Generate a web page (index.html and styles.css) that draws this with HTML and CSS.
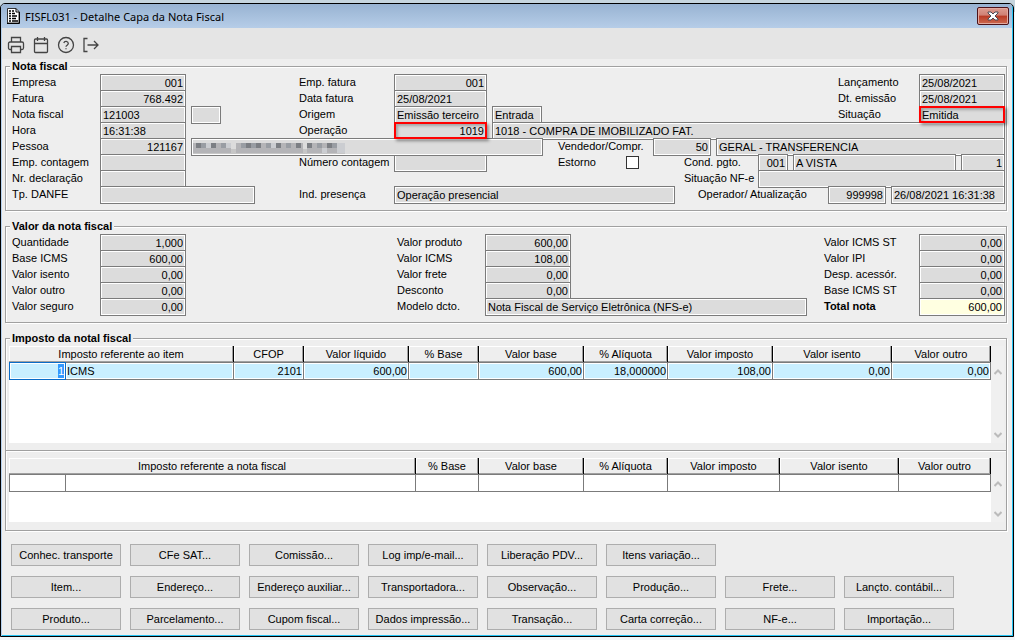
FILE: index.html
```html
<!DOCTYPE html>
<html lang="pt-BR">
<head>
    <meta charset="UTF-8">
    <title>FISFL031 - Detalhe Capa da Nota Fiscal</title>
    <link rel="stylesheet" href="styles.css">
</head>
<body>
<div class="window">
    <div class="titlebar">
        <svg class="app_icon" width="13" height="16" viewBox="0 0 13 16">
            <path d="M0.5 0.5H9L12 3.5V15H0.5Z" fill="#fff" stroke="#333"/>
            <path d="M9 0.5V4H12M12.5 4V15.5H0" fill="none" stroke="#000"/>
            <path d="M2 3H4M5 3H7M2 5.5H4M5 5.5H8M2 8H4M5 8H10M2 10.5H4M5 10.5H9M2 13H4M5 13H11" stroke="#000" stroke-width="1.5"/>
        </svg>
        <h1>FISFL031 - Detalhe Capa da Nota Fiscal</h1>
        <button class="close" aria-label="Fechar">
            <svg width="12" height="10" viewBox="0 0 12 10">
                <path d="M1 1H4L6 3L8 1H11V2L8 5L11 8V9H8L6 7L4 9H1V8L4 5L1 2Z" fill="#fff" stroke="#4a4a55"/>
            </svg>
        </button>
    </div>

    <div class="toolbar">
        <button aria-label="Imprimir">
            <svg width="18" height="18" viewBox="0 0 18 18">
                <path d="M4.5 6V1.5H13.5V6M4.5 13.5H3A1.5 1.5 0 0 1 1.5 12V7.5A1.5 1.5 0 0 1 3 6H15A1.5 1.5 0 0 1 16.5 7.5V12A1.5 1.5 0 0 1 15 13.5H13.5M4.5 10.5H13.5V16.5H4.5Z"/>
            </svg>
        </button>
        <button aria-label="Calendário">
            <svg width="18" height="18" viewBox="0 0 18 18">
                <path d="M3.5 3H14.5A1 1 0 0 1 15.5 4V15.5A1 1 0 0 1 14.5 16.5H3.5A1 1 0 0 1 2.5 15.5V4A1 1 0 0 1 3.5 3ZM2.5 7.5H15.5M5.5 1V5M12.5 1V5"/>
            </svg>
        </button>
        <button aria-label="Ajuda">
            <svg width="18" height="18" viewBox="0 0 18 18">
                <circle cx="9" cy="9" r="7.5"/>
                <path d="M6.8 7A2.3 2.3 0 0 1 11.3 7.6C11.3 9 9 9.3 9 10.7M9 12.3V13.3"/>
            </svg>
        </button>
        <button aria-label="Sair">
            <svg width="18" height="18" viewBox="0 0 18 18">
                <path d="M5.5 2.5H2V15.5H5.5M5.5 9H16M12 5L16 9L12 13"/>
            </svg>
        </button>
    </div>

    <form class="content">
        <fieldset>
            <legend>Nota fiscal</legend>
            <div class="row">
                <label class="l88" for="empresa">Empresa</label>
                <input id="empresa" class="w86 num" value="001" readonly>
                <label class="l95 col2" for="emp_fatura">Emp. fatura</label>
                <input id="emp_fatura" class="w93 num" value="001" readonly>
                <label class="l81 end" for="lancamento">Lançamento</label>
                <input id="lancamento" class="w86" value="25/08/2021" readonly>
            </div>
            <div class="row">
                <label class="l88" for="fatura">Fatura</label>
                <input id="fatura" class="w86 num" value="768.492" readonly>
                <label class="l95 col2" for="data_fatura">Data fatura</label>
                <input id="data_fatura" class="w93" value="25/08/2021" readonly>
                <label class="l81 end" for="emissao">Dt. emissão</label>
                <input id="emissao" class="w86" value="25/08/2021" readonly>
            </div>
            <div class="row">
                <label class="l88" for="nota">Nota fiscal</label>
                <input id="nota" class="w86" value="121003" readonly>
                <input class="w30 next" aria-label="Série" readonly>
                <label class="l95 col2_serie" for="origem">Origem</label>
                <input id="origem" class="w93" value="Emissão terceiro" readonly>
                <input class="w50 next" aria-label="Tipo" value="Entrada" readonly>
                <label class="l81 end" for="situacao">Situação</label>
                <input id="situacao" class="w86 marked" value="Emitida" readonly>
            </div>
            <div class="row">
                <label class="l88" for="hora">Hora</label>
                <input id="hora" class="w86" value="16:31:38" readonly>
                <label class="l95 col2" for="operacao">Operação</label>
                <input id="operacao" class="w93 num marked" value="1019" readonly>
                <input class="fill next" aria-label="Descrição da operação" value="1018 - COMPRA DE IMOBILIZADO FAT." readonly>
            </div>
            <div class="row">
                <label class="l88" for="pessoa">Pessoa</label>
                <input id="pessoa" class="w86 num" value="121167" readonly>
                <span class="masked next">
                    <input class="w352" aria-label="Nome da pessoa" readonly>
                    <svg width="152" height="14" viewBox="0 0 152 14" shape-rendering="crispEdges">
                        <path d="M0 9H152V14H0Z" fill="#c6c6c6"/>
                        <path d="M0 3H38V13H0ZM43 3H110V13H43ZM114 3H152V13H114Z" fill="#b4b4b7"/>
                        <path d="M3 3H8V8H3ZM18 3H23V8H18ZM53 3H58V8H53ZM63 3H68V8H63ZM83 3H88V8H83ZM103 3H108V8H103ZM114 3H119V8H114ZM134 3H139V8H134Z" fill="#7c7f84"/>
                        <path d="M8 3H13V8H8ZM28 3H33V8H28ZM48 3H53V8H48ZM58 3H63V8H58ZM73 3H78V8H73ZM93 3H98V8H93ZM124 3H129V8H124ZM139 3H144V8H139Z" fill="#999da3"/>
                        <path d="M13 3H18V8H13ZM33 3H38V8H33ZM78 3H83V8H78ZM129 8H134V13H129ZM144 3H152V13H144Z" fill="#cbcdd1"/>
                    </svg>
                </span>
                <label class="l95 col3" for="vendedor">Vendedor/Compr.</label>
                <input id="vendedor" class="w58 num" value="50" readonly>
                <input class="fill next" aria-label="Nome do vendedor" value="GERAL - TRANSFERENCIA" readonly>
            </div>
            <div class="row">
                <label class="l88" for="emp_contagem">Emp. contagem</label>
                <input id="emp_contagem" class="w86" readonly>
                <label class="l95 col2" for="contagem">Número contagem</label>
                <input id="contagem" class="w93" readonly>
                <label class="l68 col_estorno" for="estorno">Estorno</label>
                <input id="estorno" type="checkbox">
                <label class="l74 col_cond" for="cond">Cond. pgto.</label>
                <input id="cond" class="w30 num" value="001" readonly>
                <input class="fill next" aria-label="Descrição da condição" value="A VISTA" readonly>
                <input class="w44 num next" aria-label="Parcelas" value="1" readonly>
            </div>
            <div class="row">
                <label class="l88" for="declaracao">Nr. declaração</label>
                <input id="declaracao" class="w86" readonly>
                <label class="l74 col_nfe" for="situacao_nfe">Situação NF-e</label>
                <input id="situacao_nfe" class="fill" readonly>
            </div>
            <div class="row">
                <label class="l88" for="danfe">Tp. DANFE</label>
                <input id="danfe" class="w155" readonly>
                <label class="l95 col2_danfe" for="presenca">Ind. presença</label>
                <input id="presenca" class="w281" value="Operação presencial" readonly>
                <label class="l130 end" for="operador">Operador/ Atualização</label>
                <input id="operador" class="w58 num" value="999998" readonly>
                <input class="w114 next" aria-label="Data da atualização" value="26/08/2021 16:31:38" readonly>
            </div>
        </fieldset>

        <fieldset>
            <legend>Valor da nota fiscal</legend>
            <div class="row">
                <label class="l88" for="quantidade">Quantidade</label>
                <input id="quantidade" class="w86 num" value="1,000" readonly>
                <label class="l88 col_valor" for="produto">Valor produto</label>
                <input id="produto" class="w86 num" value="600,00" readonly>
                <label class="l95 end" for="icms_st">Valor ICMS ST</label>
                <input id="icms_st" class="w86 num" value="0,00" readonly>
            </div>
            <div class="row">
                <label class="l88" for="base_icms">Base ICMS</label>
                <input id="base_icms" class="w86 num" value="600,00" readonly>
                <label class="l88 col_valor" for="icms">Valor ICMS</label>
                <input id="icms" class="w86 num" value="108,00" readonly>
                <label class="l95 end" for="ipi">Valor IPI</label>
                <input id="ipi" class="w86 num" value="0,00" readonly>
            </div>
            <div class="row">
                <label class="l88" for="isento">Valor isento</label>
                <input id="isento" class="w86 num" value="0,00" readonly>
                <label class="l88 col_valor" for="frete">Valor frete</label>
                <input id="frete" class="w86 num" value="0,00" readonly>
                <label class="l95 end" for="acessor">Desp. acessór.</label>
                <input id="acessor" class="w86 num" value="0,00" readonly>
            </div>
            <div class="row">
                <label class="l88" for="outro">Valor outro</label>
                <input id="outro" class="w86 num" value="0,00" readonly>
                <label class="l88 col_valor" for="desconto">Desconto</label>
                <input id="desconto" class="w86 num" value="0,00" readonly>
                <label class="l95 end" for="base_st">Base ICMS ST</label>
                <input id="base_st" class="w86 num" value="0,00" readonly>
            </div>
            <div class="row">
                <label class="l88" for="seguro">Valor seguro</label>
                <input id="seguro" class="w86 num" value="0,00" readonly>
                <label class="l88 col_valor" for="modelo">Modelo dcto.</label>
                <input id="modelo" class="w322" value="Nota Fiscal de Serviço Eletrônica (NFS-e)" readonly>
                <label class="l95 end strong" for="total">Total nota</label>
                <input id="total" class="w86 num total" value="600,00" readonly>
            </div>
        </fieldset>

        <fieldset class="taxes">
            <legend>Imposto da notal fiscal</legend>
            <div class="list list_item">
                <div class="sheet">
                    <table>
                        <colgroup>
                            <col class="c56"><col><col class="c70"><col class="c105"><col class="c70"><col class="c105">
                            <col class="c84"><col class="c105"><col class="c119"><col class="c99">
                        </colgroup>
                        <thead>
                            <tr><th colspan="2">Imposto referente ao item</th><th>CFOP</th><th>Valor líquido</th><th>% Base</th><th>Valor base</th><th>% Alíquota</th><th>Valor imposto</th><th>Valor isento</th><th>Valor outro</th></tr>
                        </thead>
                        <tbody>
                            <tr class="current"><td class="focus"><span class="selected">1</span></td><td class="text">ICMS</td><td>2101</td><td>600,00</td><td></td><td>600,00</td><td>18,000000</td><td>108,00</td><td>0,00</td><td>0,00</td></tr>
                        </tbody>
                    </table>
                </div>
                <div class="scroll">
                    <button type="button" aria-label="Subir"><svg width="8" height="6" viewBox="0 0 8 6"><path d="M0.5 5L4 1.5L7.5 5"/></svg></button>
                    <button type="button" aria-label="Descer"><svg width="8" height="6" viewBox="0 0 8 6"><path d="M0.5 1L4 4.5L7.5 1"/></svg></button>
                </div>
            </div>
            <hr>
            <div class="list list_nota">
                <div class="sheet">
                    <table>
                        <colgroup>
                            <col class="c56"><col><col class="c63"><col class="c105"><col class="c84"><col class="c112">
                            <col class="c119"><col class="c92">
                        </colgroup>
                        <thead>
                            <tr><th colspan="2">Imposto referente a nota fiscal</th><th>% Base</th><th>Valor base</th><th>% Alíquota</th><th>Valor imposto</th><th>Valor isento</th><th>Valor outro</th></tr>
                        </thead>
                        <tbody>
                            <tr><td></td><td></td><td></td><td></td><td></td><td></td><td></td><td></td></tr>
                        </tbody>
                    </table>
                </div>
                <div class="scroll">
                    <button type="button" aria-label="Subir"><svg width="8" height="6" viewBox="0 0 8 6"><path d="M0.5 5L4 1.5L7.5 5"/></svg></button>
                    <button type="button" aria-label="Descer"><svg width="8" height="6" viewBox="0 0 8 6"><path d="M0.5 1L4 4.5L7.5 1"/></svg></button>
                </div>
            </div>
        </fieldset>

        <div class="actions">
            <div class="action_row">
                <button type="button">Conhec. transporte</button>
                <button type="button">CFe SAT...</button>
                <button type="button">Comissão...</button>
                <button type="button">Log imp/e-mail...</button>
                <button type="button">Liberação PDV...</button>
                <button type="button">Itens variação...</button>
            </div>
            <div class="action_row">
                <button type="button">Item...</button>
                <button type="button">Endereço...</button>
                <button type="button">Endereço auxiliar...</button>
                <button type="button">Transportadora...</button>
                <button type="button">Observação...</button>
                <button type="button">Produção...</button>
                <button type="button">Frete...</button>
                <button type="button">Lançto. contábil...</button>
            </div>
            <div class="action_row">
                <button type="button">Produto...</button>
                <button type="button">Parcelamento...</button>
                <button type="button">Cupom fiscal...</button>
                <button type="button">Dados impressão...</button>
                <button type="button">Transação...</button>
                <button type="button">Carta correção...</button>
                <button type="button">NF-e...</button>
                <button type="button">Importação...</button>
            </div>
        </div>
    </form>
</div>
</body>
</html>
```
FILE: styles.css
```css
*{ box-sizing: border-box; }
html{ background: #f4f6f8; }
body{
    margin: 0;
    padding: 3px 1px 2px 0;
    background: linear-gradient(#c6d5de 0, #c6d5de 12px, #f4f6f8 12px);
    color: #000;
    font: 11px/16px "Liberation Sans", Arial, sans-serif;
}
button,input{ font: inherit; color: inherit; margin: 0; border-radius: 0; }
.window{
    border: 1px solid #000;
    border-radius: 5px 5px 0 0;
    background: #eee;
    box-shadow: inset 1px 0 #b4d0ee, inset -1px -1px #26c4f4;
    overflow: hidden;
}

/* title bar */
.titlebar{
    display: flex;
    align-items: center;
    height: 24px;
    margin-right: 1px;
    padding: 0 3px 0 6px;
    background: linear-gradient(#98b3d2, #b6cde8);
}
.titlebar h1{
    margin: 0 auto 0 5px;
    padding-top: 1px;
    font: 11px/16px "Noto Sans", "Open Sans", sans-serif;
}
.close{
    display: flex;
    align-items: center;
    justify-content: center;
    width: 32px;
    height: 18px;
    padding: 0;
    border: 1px solid #4d1218;
    border-radius: 2px;
    background: linear-gradient(#dd9c90 0, #cf8074 45%, #b93a25 50%, #cc6a50);
    box-shadow: inset 0 0 0 1px #e3a99f;
}

/* toolbar */
.toolbar{
    display: flex;
    align-items: center;
    gap: 7px;
    height: 31px;
    margin: 0 1px;
    padding: 2px 5px 0;
    background: #e5e5e5;
}
.toolbar button{
    width: 18px;
    height: 18px;
    padding: 0;
    border: 0;
    background: none;
}
.toolbar svg{
    display: block;
    fill: none;
    stroke: #444;
    stroke-width: 1.3;
}

/* groups */
.content{ padding: 0 6px 6px 4px; }
fieldset{
    min-width: 0;
    margin: 0 0 8px;
    padding: 1px 1px 8px 6px;
    border: 1px solid #a0a0a0;
    box-shadow: inset 1px 1px #fff, 1px 1px #fff;
}
legend{
    margin-left: -2px;
    padding: 0 2px;
    background: #eee;
    font-weight: bold;
    line-height: 14px;
}
.row{
    display: flex;
    height: 16px;
}
.row label,.row input,.masked{ flex: none; }
.row label{ white-space: nowrap; }
.row input{
    height: 18px;
    padding: 0 2px;
    border: 1px solid #7b7b7b;
    background: #dcdcdc;
    box-shadow: inset 0 0 0 1px #fff;
    outline: none;
}
.row .num{ text-align: right; }
.row .fill{ flex: 1; min-width: 0; }
.row .total{ background: #ffffe1; }
.row .marked{
    position: relative;
    z-index: 1;
    height: 17px;
    padding: 0 1px;
    border: 2px solid #f00;
    box-shadow: 2px 2px 3px rgba(0, 0, 0, 0.4), inset 2px 2px 3px rgba(0, 0, 0, 0.25);
}
.row input[type="checkbox"]{
    appearance: none;
    width: 13px;
    height: 13px;
    margin-top: 2px;
    padding: 0;
    border-color: #333;
    background: #fff;
}
.row .strong{ font-weight: bold; }
.next{ margin-left: 5px; }
.row .end{ margin-left: auto; }

.l68{ width: 68px; }
.l74{ width: 74px; }
.l81{ width: 81px; }
.l88{ width: 88px; }
.l95{ width: 95px; }
.l130{ width: 130px; }

.w30{ width: 30px; }
.w44{ width: 44px; }
.w50{ width: 50px; }
.w58{ width: 58px; }
.w86{ width: 86px; }
.w93{ width: 93px; }
.w114{ width: 114px; }
.w155{ width: 155px; }
.w281{ width: 281px; }
.w322{ width: 322px; }
.w352{ width: 352px; }

.col2{ margin-left: 113px; }
.col2_serie{ margin-left: 78px; }
.col2_danfe{ margin-left: 44px; }
.col3{ margin-left: 15px; }
.col_estorno{ margin-left: 71px; }
.col_cond{ margin-left: 45px; }
.col_nfe{ margin-left: 498px; }
.col_valor{ margin-left: 211px; }

.masked{ position: relative; }
.masked svg{
    position: absolute;
    left: 2px;
    top: 2px;
}

/* tax lists */
.taxes{ padding: 1px 0 8px; margin-bottom: 13px; }
.taxes legend{ margin-left: 4px; }
.taxes hr{
    height: 2px;
    margin: 7px 0 6px;
    border: 0;
    border-top: 1px solid #a0a0a0;
    background: #fff;
}
.list{
    display: flex;
    padding: 0 2px 0 3px;
}
.list_item{ height: 97px; }
.list_nota{ height: 64px; }
.sheet{ flex: 1; background: #fff; }
.sheet table{
    width: 100%;
    table-layout: fixed;
    border-collapse: separate;
    border-spacing: 0;
}
.sheet th{
    height: 16px;
    padding: 1px 0 0;
    border-right: 1px solid #000;
    background: #eee;
    box-shadow: inset -1px -1px #a0a0a0, inset 1px 1px #fff;
    font-weight: normal;
    line-height: 15px;
}
.sheet td{
    height: 18px;
    padding: 0 1px;
    border: 1px solid #7b7b7b;
    border-left-width: 0;
    line-height: 16px;
    text-align: right;
}
.sheet td:first-child{ border-left-width: 1px; }
.sheet .text{ text-align: left; }
.sheet .current td{ background: #c9efff; box-shadow: inset 0 0 0 1px #fff; }
.sheet .current .focus{ border-color: #0a6cc8; }
.selected{
    display: inline-block;
    height: 14px;
    line-height: 14px;
    background: #3399ff;
    color: #fff;
}
.c56{ width: 57px; }
.c63{ width: 63px; }
.c70{ width: 70px; }
.c84{ width: 84px; }
.c92{ width: 92px; }
.c99{ width: 99px; }
.c105{ width: 105px; }
.c112{ width: 112px; }
.c119{ width: 119px; }
.scroll{
    display: flex;
    flex-direction: column;
    justify-content: space-between;
    width: 13px;
    padding: 17px 0 0;
    background: #f0f0f0;
}
.scroll button{
    display: flex;
    align-items: center;
    justify-content: center;
    height: 17px;
    padding: 0;
    border: 0;
    background: none;
}
.scroll svg{ fill: none; stroke: #bbb; stroke-width: 2; }

/* bottom buttons */
.actions{ padding-left: 6px; }
.action_row{
    display: flex;
    gap: 9px;
    margin-bottom: 10px;
}
.action_row:last-child{ margin-bottom: 0; }
.action_row button{
    width: 110px;
    height: 22px;
    padding: 0;
    border: 1px solid #adadad;
    background: #e1e1e1;
    white-space: nowrap;
}
```
